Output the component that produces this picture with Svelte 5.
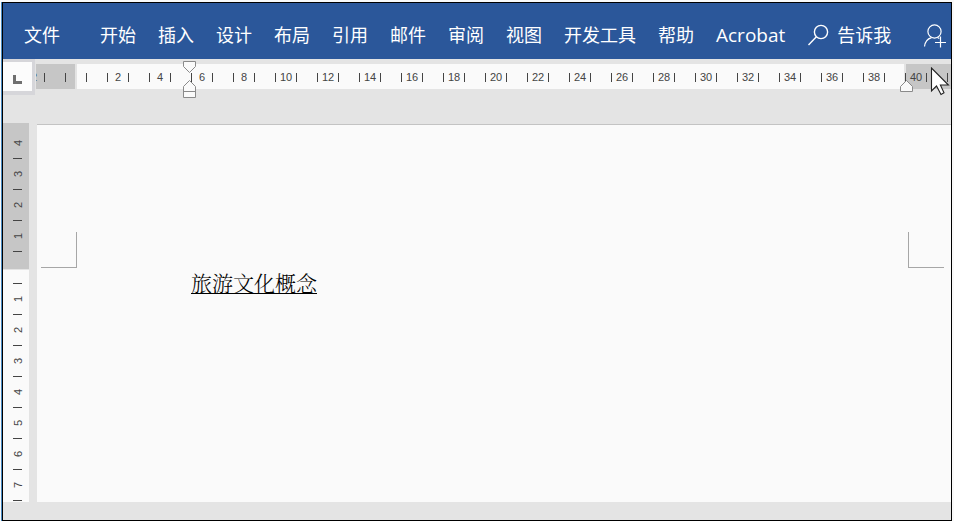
<script>
    const tabs = ['开始', '插入', '设计', '布局', '引用', '邮件', '审阅', '视图', '开发工具', '帮助', 'Acrobat'];

    // one cell is two characters wide, with its number in the middle
    const columns = Array.from({ length: 23 }, (_, i) => Math.abs(i - 1) * 2);
    const above = [4, 3, 2, 1];
    const below = [1, 2, 3, 4, 5, 6, 7];

    let activeTab = $state('');
</script>

<div class="window">
    <nav class="ribbon">
        <button class="tab file">文件</button>
        {#each tabs as tab}
            <button class="tab" class:latin={tab === 'Acrobat'} aria-pressed={activeTab === tab} onclick={() => (activeTab = tab)}>{tab}</button>
        {/each}
        <button class="tab tell">
            <svg width="22" height="24" viewBox="0 0 22 24" fill="none" stroke="#fff" stroke-width="1.4">
                <circle cx="14" cy="9" r="6.6" />
                <path d="M9.4 13.8 1.5 22" />
            </svg>
            告诉我
        </button>
        <button class="share" aria-label="共享">
            <svg width="24" height="26" viewBox="0 0 24 26" fill="none" stroke="#fff" stroke-width="1.2">
                <circle cx="11.5" cy="8.5" r="6.6" />
                <path d="M1.5 23.5C2 18.5 4.5 15.8 8.5 14.6M14.5 14.4l1.8 1M17.5 13.5v11M12 19.5h11" />
            </svg>
        </button>
    </nav>

    <div class="ruler-row">
        <button class="tab-stop" aria-label="左对齐制表符">
            <svg width="9" height="9" viewBox="0 0 9 9"><path d="M0 0h3v6h6v3H0z" fill="#6f6f6f" /></svg>
        </button>
        <div class="ruler">
            <div class="track">
                {#each columns as n}
                    <div class="cell"><i></i><span>{n || ''}</span><i></i></div>
                {/each}
            </div>
            <button class="marker first-line" aria-label="首行缩进">
                <svg width="13" height="13" viewBox="0 0 13 13"><path d="M.5 .5h12v5l-6 6-6-6z" /></svg>
            </button>
            <button class="marker hanging" aria-label="左缩进">
                <svg width="13" height="18" viewBox="0 0 13 18"><path d="M.5 17.5v-11l6-6 6 6v11zM.5 11.5h12" /></svg>
            </button>
            <button class="marker right" aria-label="右缩进">
                <svg width="13" height="12" viewBox="0 0 13 12"><path d="M.5 11.5v-5l6-6 6 6v5z" /></svg>
            </button>
        </div>
    </div>

    <main class="workspace">
        <div class="side-ruler">
            <div class="margin-part">
                {#each above as n}
                    <span>{n}</span><i></i>
                {/each}
            </div>
            <div class="text-part">
                <i></i>
                {#each below as n}
                    <span>{n}</span><i></i>
                {/each}
            </div>
        </div>
        <article class="page">
            <div class="corners">
                <div class="corner left"></div>
                <div class="corner"></div>
            </div>
            <p><u>旅游文化概念</u></p>
        </article>
    </main>

    <svg class="pointer" width="20" height="30" viewBox="0 0 20 30">
        <path d="M1.5 1v23l5-5 4.5 8.5 3-1.8-3.6-7.7h8z" fill="#fff" stroke="#222" stroke-width="1.1" />
    </svg>
</div>

<style>
    :global(body) {
        margin: 0;
        background: #f9f9f9;
    }

    button {
        border: 0;
        padding: 0;
        background: none;
        font: inherit;
        color: inherit;
    }

    svg { display: block; flex: none; }

    .window {
        position: relative;
        display: flex;
        flex-direction: column;
        box-sizing: border-box;
        min-height: calc(100vh - 2px);
        margin: 2px 2px 0;
        border: 1px solid #000;
        box-shadow: -1px 0 #4a8cc4;
        background: #e4e4e4;
        overflow: hidden;
        font-family: "Open Sans", "Noto Sans CJK SC", sans-serif;
    }

    .ribbon {
        display: flex;
        align-items: center;
        height: 56px;
        padding: 0 4px 0 10px;
        background: #2b579a;
        color: #fff;
        font-size: 18px;
    }
    .tab { padding: 8px 11px 0; line-height: 28px; white-space: nowrap; }
    .file { margin-right: 18px; }
    .latin { font-size: 19px; }
    .tell { display: flex; align-items: center; gap: 8px; }
    .share { margin-left: auto; padding-top: 10px; }

    .ruler-row {
        display: flex;
        align-items: flex-start;
        height: 64px;
    }
    .tab-stop {
        display: flex;
        align-items: center;
        justify-content: center;
        box-sizing: border-box;
        width: 32px;
        height: 36px;
        padding-top: 6px;
        border: solid #d6d6da;
        border-width: 3px 3px 4px 0;
        background: #fcfcfc;
    }
    .ruler {
        position: relative;
        flex: 1;
        min-width: 0;
        margin: 5px 0 0 1px;
    }
    .track {
        display: flex;
        box-sizing: border-box;
        height: 25px;
        padding-top: 1px;
        overflow: hidden;
        background: linear-gradient(90deg, #c6c6c6 39px, #e4e4e4 39px, #e4e4e4 41px, #fafafa 41px, #fafafa calc(100% - 47px), #e4e4e4 calc(100% - 47px), #e4e4e4 calc(100% - 45px), #c6c6c6 calc(100% - 45px));
        font: 11px/25px "Liberation Sans", Arial, sans-serif;
        color: #444;
    }
    .cell {
        display: grid;
        grid-template-columns: 11px 20px 11px;
        flex: none;
        align-items: center;
        width: 42px;
        text-align: center;
    }
    .cell:first-child { margin-left: -23px; }
    .cell i { width: 1px; height: 9px; background: #444; }
    .cell i:first-child { justify-self: end; }

    .marker { position: absolute; }
    .marker path { fill: #fafafa; stroke: #8a8a8a; }
    .first-line { left: 147px; top: -3px; }
    .hanging { left: 147px; top: 16px; }
    .right { right: 38px; top: 16px; }

    .workspace {
        display: flex;
        flex: 1;
        gap: 8px;
        margin-bottom: 18px;
    }
    .side-ruler {
        display: flex;
        flex-direction: column;
        width: 26px;
        background: #fafafa;
        font: 11px/32px "Liberation Sans", Arial, sans-serif;
        color: #444;
    }
    .margin-part, .text-part {
        display: flex;
        flex-direction: column;
        align-items: center;
        padding-left: 2px;
    }
    .margin-part {
        box-sizing: border-box;
        height: 147px;
        padding-top: 5px;
        background: #c6c6c6;
        border-bottom: 1px solid #e4e4e4;
    }
    .text-part { padding-top: 13px; }
    .side-ruler span {
        width: 30px;
        height: 30px;
        text-align: center;
        transform: rotate(-90deg);
    }
    .side-ruler i { width: 9px; height: 1px; background: #444; }

    .page {
        flex: 1;
        margin-top: 1px;
        border-top: 1px solid #c3c3c3;
        background: #fafafa;
    }
    .corners {
        display: flex;
        justify-content: space-between;
        padding: 107px 7px 0 4px;
    }
    .corner {
        box-sizing: border-box;
        width: 36px;
        height: 36px;
        border: solid #a6a6a6;
        border-width: 0 0 1px 1px;
    }
    .corner.left { border-width: 0 1px 1px 0; }
    .page p {
        margin: 0;
        padding: 0 154px;
        font: 300 21px/28px "Noto Serif CJK SC", SimSun, "Noto Sans CJK SC", serif;
        color: #000;
    }
    .page u { text-decoration-thickness: 1px; text-underline-offset: 2px; }

    .pointer { position: absolute; right: 1px; top: 64px; }
</style>
